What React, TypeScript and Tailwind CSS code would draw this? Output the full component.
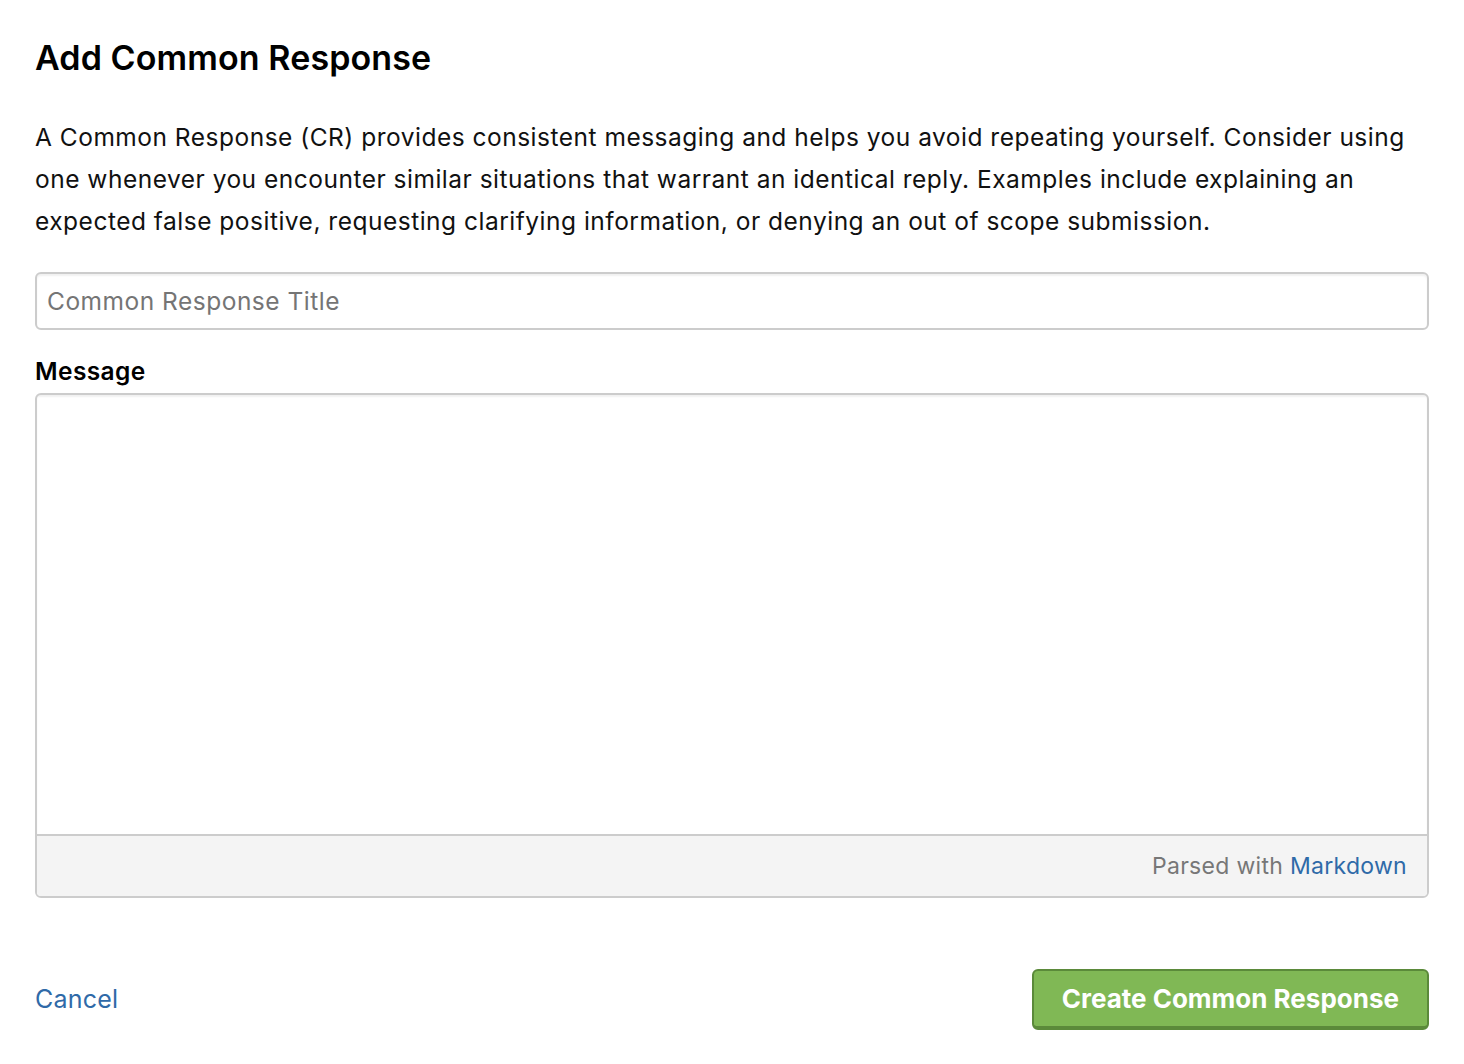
import React from "react";

export default function App() {
  return (
    <div className="min-h-screen bg-white text-black">
      <div className="px-[35px] pt-[36px] font-['Inter','Noto_Sans',sans-serif]">
        <h1 className="text-[34px] font-semibold leading-[44px] tracking-[0.1px]">Add Common Response</h1>
        <p className="mt-[36px] text-[24.5px] leading-[42px] text-[#111] tracking-[0.5px]">
          A Common Response (CR) provides consistent messaging and helps you avoid repeating yourself. Consider using one whenever you encounter similar situations that warrant an identical reply. Examples include explaining an expected false positive, requesting clarifying information, or denying an out of scope submission.
        </p>
        <input
          placeholder="Common Response Title"
          className="mt-[30px] block h-[58px] w-full rounded-[6px] border-2 border-[#cccccc] px-[10px] text-[24.5px] tracking-[0.5px] text-black placeholder:text-[#757575] shadow-[inset_0_2px_2px_rgba(0,0,0,0.06)] outline-none"
        />
        <div className="mt-[26px] text-[24.5px] font-semibold leading-[30px] tracking-[0.4px]">Message</div>
        <div className="mt-[7px] flex h-[505px] flex-col overflow-hidden rounded-[6px] border-2 border-[#cccccc]">
          <textarea className="flex-1 resize-none p-3 text-[24px] outline-none shadow-[inset_0_2px_2px_rgba(0,0,0,0.06)]" />
          <div className="flex h-[62px] items-center justify-end border-t-2 border-[#cccccc] bg-[#f4f4f4] pr-[20px] text-[23px] tracking-[0.3px] text-[#777777]">
            <span>Parsed with&nbsp;</span>
            <a className="text-[#2f6aa8]">Markdown</a>
          </div>
        </div>
        <div className="mt-[71px] flex items-center justify-between">
          <a className="text-[25px] tracking-[0.2px] text-[#2f6aa8]">Cancel</a>
          <button className="h-[61px] rounded-[6px] border-2 border-b-4 border-[#5b8a3a] bg-[#80b855] px-[28px] text-[26px] font-bold text-white">
            Create Common Response
          </button>
        </div>
      </div>
    </div>
  );
}
